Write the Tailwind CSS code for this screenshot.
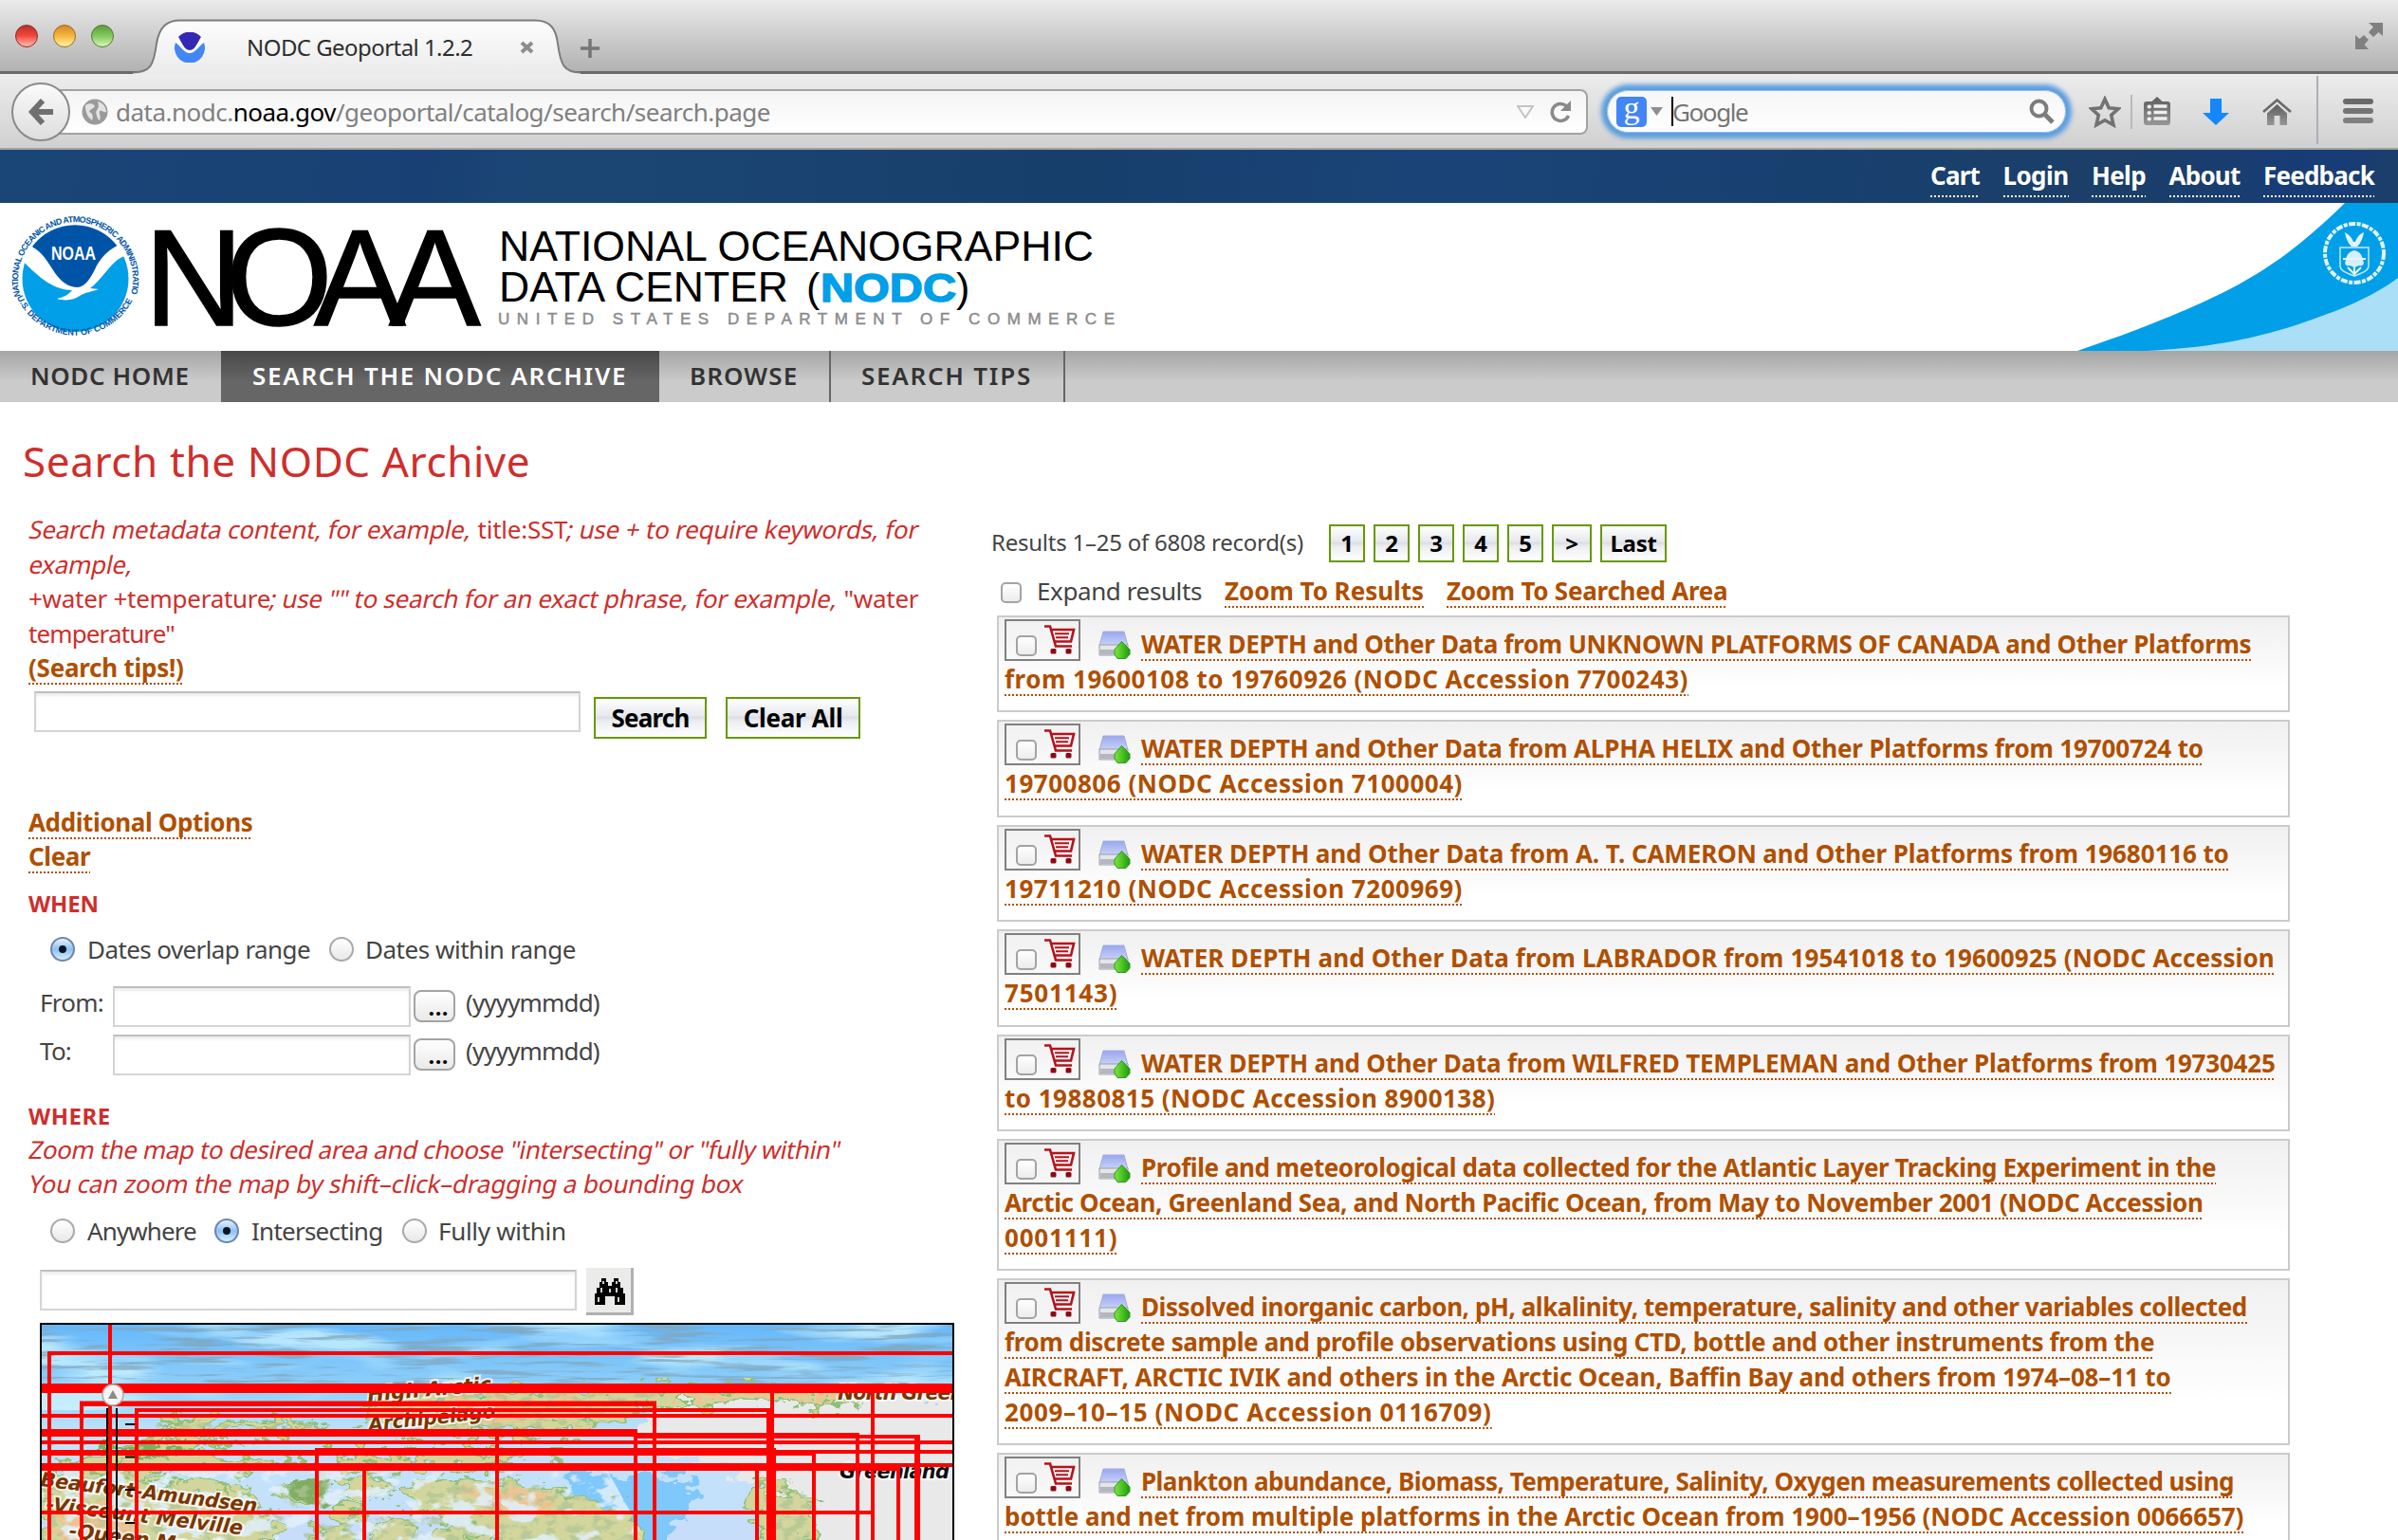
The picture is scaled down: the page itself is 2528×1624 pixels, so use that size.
<!DOCTYPE html>
<html lang="en">
<head>
<meta charset="utf-8">
<title>NODC Geoportal 1.2.2</title>
<script src="https://cdn.jsdelivr.net/npm/@tailwindcss/browser@4"></script>
</head>
<body class="bg-white overflow-hidden w-[2528px] h-[1624px] font-['Noto_Sans','Open_Sans',sans-serif] text-[26px] text-[#444]">

<svg class="absolute size-0" width="0" height="0">
  <defs>
    <linearGradient id="gGrey" x1="0" y1="0" x2="0" y2="1"><stop offset="0" stop-color="#5c5c5c"/><stop offset="1" stop-color="#979797"/></linearGradient>
    <linearGradient id="gDrive" x1="0" y1="0" x2="0" y2="1"><stop offset="0" stop-color="#9aa6f0"/><stop offset="1" stop-color="#c9d3f7"/></linearGradient>
    <linearGradient id="gGreen" x1="0" y1="0" x2="1" y2="0"><stop offset="0" stop-color="#7ee83c"/><stop offset="1" stop-color="#1d9a10"/></linearGradient>
    <symbol id="cart" viewBox="0 0 34 31">
      <path d="M1 1.5H7L13 22.5H30" fill="none" stroke="#b5121b" stroke-width="2.6"/>
      <path d="M8 5H32L29 17.5H12" fill="none" stroke="#b5121b" stroke-width="2.6"/>
      <path d="M12 9.3H27M13 13.3H26" stroke="#b5121b" stroke-width="2"/>
      <rect x="7.500" y="25" width="6" height="5.500" rx="1.500" fill="#8d0a12"/><rect x="23.500" y="25" width="6" height="5.500" rx="1.500" fill="#8d0a12"/>
    </symbol>
    <symbol id="drive" viewBox="0 0 34 30">
      <path d="M5 1H27L31 16H1Z" fill="url(#gDrive)" stroke="#a5addc" stroke-width="1"/>
      <path d="M1 15H31V26H1Z" fill="#e3e5e8" stroke="#9a9fa8" stroke-width="1"/>
      <path d="M2 20H18V25H2Z" fill="#b3b7bf"/>
      <path d="M24.500 11.500L33 20V25L29 29.500H20L17 25V20Z" fill="url(#gGreen)" stroke="#2a9a1a" stroke-width="1"/>
    </symbol>
  </defs>
</svg>

<!-- tab strip -->
<header class="flex h-[78px] border-b-[3px] border-[#6a6a6a] bg-linear-to-b from-[#eaeaea] to-[#b2b2b2]">
  <div class="flex gap-4 pl-4 pt-[26px]">
    <i class="size-6 rounded-full border border-[#8d2a22] bg-linear-to-b from-[#b5322a] via-[#f4473c] to-[#ffb9b2]"></i>
    <i class="size-6 rounded-full border border-[#9a6a1c] bg-linear-to-b from-[#d8862a] via-[#f7b73c] to-[#fff3a0]"></i>
    <i class="size-6 rounded-full border border-[#4c7a30] bg-linear-to-b from-[#5f9c3c] via-[#84c95c] to-[#d8f7b8]"></i>
  </div>
  <div class="relative ml-[20px] h-[78px] w-[472px]">
    <svg class="absolute inset-0" width="472" height="78" viewBox="0 0 472 78">
      <defs><linearGradient id="tb" x1="0" y1="0" x2="0" y2="1"><stop offset="0" stop-color="#fdfdfd"/><stop offset="1" stop-color="#ebebeb"/></linearGradient></defs>
      <path d="M0 78V76C18 76 22 70 25 46C28 28 36 21.500 50 21.500H424C440 21.500 446 30 448 46C451 68 454 76 472 76V78Z" fill="url(#tb)"/>
      <path d="M0 76.500C18 76 22 70 25 46C28 28 36 21.500 50 21.500H424C440 21.500 446 30 448 46C451 68 454 76 472 76.500" fill="none" stroke="#7c7c7c" stroke-width="2"/>
    </svg>
    <div class="relative flex h-[78px] pl-[44px]">
      <svg class="mt-[34px] shrink-0" width="32" height="32" viewBox="0 0 32 32"><circle cx="16" cy="16" r="16" fill="#fff"/><path d="M1 11C6 14 10 22 16 22C22 22 26 14 31 11A16 16 0 1 1 1 11Z" fill="#4287f5"/><path d="M4 5A16 16 0 0 1 28 5C25 9 22 19 16 19C10 19 7 9 4 5Z" fill="#3329b5"/></svg>
      <span class="ml-[44px] mt-[32px] w-[288px] whitespace-nowrap text-[24px] leading-[36px] tracking-[-0.550px] text-[#2e2e2e]">NODC Geoportal 1.2.2</span>
      <svg class="mt-[43px] shrink-0" width="15" height="14" viewBox="0 0 15 14"><path d="M2 2L13 12M13 2L2 12" stroke="#8d8d8d" stroke-width="4"/></svg>
    </div>
  </div>
  <svg class="mt-[41px]" width="20" height="20" viewBox="0 0 20 20"><path d="M10 0V20M0 10H20" stroke="#767676" stroke-width="3.500"/></svg>
  <svg class="ml-auto mr-4 mt-6" width="29" height="28" viewBox="0 0 29 28"><path d="M14 0H29V14L24.500 10L19 15L14 10L19 4.500Z" fill="#808080"/><path d="M0 13L4.500 17L9 13L14 18L9.500 23L14 28H0Z" fill="#808080"/></svg>
</header>

<!-- toolbar -->
<div class="flex h-20 items-start border-b-2 border-[#a0a0a0] bg-linear-to-b from-[#ededed] to-[#d0d0d0]">
  <div class="relative z-10 ml-[12px] mt-[9px] flex size-[62px] items-center justify-center rounded-full border-2 border-[#8a8a8a] bg-linear-to-b from-[#fafafa] to-[#dedede]">
    <svg width="28" height="30" viewBox="0 0 28 30"><path d="M16 3L5 15L16 27M6 15H27" fill="none" stroke="#6f6f6f" stroke-width="6"/></svg>
  </div>
  <div class="-ml-[31px] mt-4 flex h-12 w-[1631px] items-center rounded-r-lg border-2 border-[#a2a2a2] bg-linear-to-b from-[#f4f4f4] to-white pl-[41px]">
    <svg width="28" height="28" viewBox="0 0 28 28"><circle cx="14" cy="14" r="13.500" fill="#9a9a9a"/><path d="M4 7C8 4 13 5 14 8C12 11 9 11 8 14C11 15 13 18 11 23C7 20 4 15 4 7ZM17 3C22 4 26 9 26 14C23 15 22 12 19 13C18 17 21 18 19 23C16 21 16 17 15 14C17 11 19 9 17 3Z" fill="#e2e2e2"/></svg>
    <span class="ml-2 mt-px whitespace-nowrap tracking-[-0.51px] text-[#808080]">data.nodc.<span class="text-black">noaa.gov</span>/geoportal/catalog/search/search.page</span>
    <svg class="ml-auto" width="18" height="14" viewBox="0 0 18 14"><path d="M1 1H17L9 13Z" fill="none" stroke="#c4c4c4" stroke-width="2"/></svg>
    <svg class="ml-[16px] mr-3.5" width="25" height="26" viewBox="0 0 25 26"><path d="M20.500 17A9 9 0 1 1 18 6.500" fill="none" stroke="#8a8a8a" stroke-width="3.500"/><path d="M23 1V12H12Z" fill="#8a8a8a"/></svg>
  </div>
  <div class="ml-[20px] mt-[17px] flex h-[45px] w-[484px] items-center rounded-full border border-[#8fbdea] bg-linear-to-b from-[#f6f6f6] to-white pl-[9px] shadow-[0_0_5px_6px_#5a9de0]">
    <span class="flex size-8 items-center justify-center rounded-[5px] bg-[#4285f4] font-['Liberation_Serif',serif] text-[34px] leading-none text-white"><span class="-mt-2">g</span></span>
    <svg class="ml-1" width="13" height="9" viewBox="0 0 13 9"><path d="M0 0H13L6.500 9Z" fill="#8e8e8e"/></svg>
    <span class="ml-[9px] h-[31px] w-0.5 bg-black"></span>
    <span class="-ml-px mt-0.5 tracking-[-1.4px] text-[#757575]">Google</span>
    <svg class="ml-auto mr-[11px]" width="27" height="27" viewBox="0 0 27 27"><circle cx="10.500" cy="10.500" r="8" fill="none" stroke="#7d7d7d" stroke-width="4"/><path d="M16 16L25 25" stroke="#7d7d7d" stroke-width="5"/></svg>
  </div>
  <svg class="ml-[24px] mt-[23px]" width="34" height="34" viewBox="0 0 34 34"><path d="M17 3.500L21.200 12.800L31 13.800L23.700 20.400L26 30.800L17 25.800L8 30.800L10.300 20.400L3 13.800L12.800 12.800Z" fill="none" stroke="#727272" stroke-width="3.600"/></svg>
  <span class="ml-[10px] mt-[22px] h-9 w-0.5 bg-[#b9b9b9]"></span>
  <svg class="ml-[12px] mt-6" width="28" height="30" viewBox="0 0 28 30"><path d="M3 5H8.500L14 0L19.500 5H25Q28 5 28 8V27Q28 30 25 30H3Q0 30 0 27V8Q0 5 3 5Z" fill="url(#gGrey)"/><path d="M5.500 10.500H6M5.500 17H6M5.500 23.500H6" stroke="#eee" stroke-width="4" stroke-linecap="round"/><path d="M10.500 10H24.500M10.500 16.500H24.500M10.500 23H24.500" stroke="#eee" stroke-width="3.600"/></svg>
  <svg class="ml-[34px] mt-[26px]" width="28" height="28" viewBox="0 0 28 28"><path d="M8 0H20V15H28L14 28L0 15H8Z" fill="#1488fb"/></svg>
  <svg class="ml-[35px] mt-[26px]" width="31" height="28" viewBox="0 0 31 28"><path d="M1 14L15.500 1.500L30 14" fill="none" stroke="#6a6a6a" stroke-width="2.600"/><path d="M15.500 6L26 15.500V28H18.500V18H12.500V28H5V15.500Z" fill="url(#gGrey)"/></svg>
  <span class="ml-[26px] mt-0.5 h-[72px] w-0.5 bg-[#aab0b8]"></span>
  <div class="ml-[26px] mt-[26px] flex w-8 flex-col gap-1"><i class="h-1.5 rounded-full bg-[#6a6a6a]"></i><i class="h-1.5 rounded-full bg-[#747474]"></i><i class="h-1.5 rounded-full bg-[#808080]"></i></div>
</div>

<!-- utility links -->
<nav class="flex h-14 justify-end gap-[24.500px] bg-[#19426f] bg-[linear-gradient(100deg,#1a4577_0%,#184074_18%,#1b4674_22%,#173f6c_45%,#1a4478_60%,#18406f_75%,#1b3f68_88%,#173c78_97%,#1c3f68_100%)] pr-[25px] pt-[9px] font-bold leading-9 text-white" id="util"></nav>

<!-- banner -->
<div class="flex h-[156px] justify-between">
  <svg width="1200" height="156" viewBox="0 0 1200 156">
    <defs><path id="ringTop" d="M21.500 98A60.500 60.500 0 1 1 137.500 98"/><path id="ringBot" d="M15 92A67.500 67.500 0 0 0 144 92"/></defs>
    <circle cx="79.500" cy="80" r="56" fill="#009fe8"/>
    <path d="M34 46A56 56 0 0 1 124 46C112 53 104 65 97 77C92 86 88 90 80 90C70 89 62 80 55 70C48 58 42 50 34 46Z" fill="#0054a8"/>
    <path d="M32 46C44 50 50 62 58 74C65 84 73 89 82 89C91 88 97 77 102 66C109 54 117 48 126 44L131 56C121 60 115 69 108 77C103 83 100 86 95 90L104 91C96 94 90 94 84 98C78 102 70 104 60 101C68 99 72 97 76 92C58 92 42 80 24 61Z" fill="#fff"/>
    <text x="54" y="60" textLength="47" lengthAdjust="spacingAndGlyphs" font-family="Liberation Sans, sans-serif" font-weight="700" font-size="20" fill="#fff">NOAA</text>
    <g font-family="Liberation Sans, sans-serif" font-weight="700" font-size="9" fill="#0054a8"><text textLength="228"><textPath href="#ringTop">NATIONAL OCEANIC AND ATMOSPHERIC ADMINISTRATION</textPath></text><text textLength="152"><textPath href="#ringBot" startOffset="8">U.S. DEPARTMENT OF COMMERCE</textPath></text></g>
    <text x="152 238 331 410" y="129" font-family="Liberation Sans, sans-serif" font-size="145" stroke="#000" stroke-width="1.500">NOAA</text>
    <g font-family="Liberation Sans, sans-serif" font-size="43">
      <text x="526" y="61" textLength="627" lengthAdjust="spacingAndGlyphs" font-size="44">NATIONAL OCEANOGRAPHIC</text>
      <text x="526" y="104" textLength="305" lengthAdjust="spacingAndGlyphs" font-size="44">DATA CENTER</text>
      <text x="850" y="104">(</text><text x="865" y="104" textLength="143" lengthAdjust="spacingAndGlyphs" font-weight="700" fill="#009fe8" stroke="#009fe8" stroke-width="1.500">NODC</text><text x="1008" y="104">)</text>
      <text x="525" y="128" textLength="650" lengthAdjust="spacing" font-size="17" fill="#8c8c8c" stroke="#8c8c8c" stroke-width=".5">UNITED STATES DEPARTMENT OF COMMERCE</text>
    </g>
  </svg>
  <svg width="340" height="156" viewBox="0 0 340 156">
    <path d="M284 0C245 38 215 62 172 86C120 114 50 140 2 156H340V0Z" fill="#009fe8"/>
    <path d="M75 156C150 152 190 142 232 129C280 113 315 98 340 79V156Z" fill="#aadff7"/>
    <circle cx="294" cy="53" r="31" fill="none" stroke="#e3f5fd" stroke-width="4" stroke-dasharray="7 1.500 4 1.500"/>
    <path d="M284 31C288 33 291 36 293 41L295 41C297 36 299 33 304 31C303 38 300 43 297 46H291C288 43 285 38 284 31Z" fill="#e3f5fd"/>
    <path d="M279 47H309V66C309 72 302 74 294 77C286 74 279 72 279 66Z" fill="none" stroke="#c5eafa" stroke-width="1.500"/>
    <path d="M285 60C286 53 290 51 294 50C298 51 302 53 303 60C305 65 303 67 299 66L294 68L289 66C285 67 283 65 285 60Z" fill="#d5f0fc"/>
    <path d="M282 59H306M294 66V76M287 68L294 75L301 68" stroke="#e3f5fd" stroke-width="2" fill="none"/>
  </svg>
</div>

<!-- main menu -->
<nav class="flex h-[54px] bg-linear-to-b from-[#a6a6a6] to-[#cbcbcb] to-60% font-semibold leading-[53px] text-[#333] whitespace-nowrap">
  <a class="w-[233px] pl-8 tracking-[0.6px]">NODC HOME</a>
  <a class="w-[462px] bg-linear-to-b from-[#484848] to-[#666] to-60% pl-[33px] tracking-[1.700px] text-white">SEARCH THE NODC ARCHIVE</a>
  <a class="w-[181px] border-r-2 border-[#666] pl-8 tracking-[1.100px]">BROWSE</a>
  <a class="w-[247px] border-r-2 border-[#666] pl-8 tracking-[1.750px]">SEARCH TIPS</a>
</nav>

<h1 class="pl-6 pt-8 text-[44px] leading-[60px] tracking-[0.6px] text-[#cf2e2b]">Search the NODC Archive</h1>

<main class="flex">
  <section class="w-[1045px] shrink-0 pl-[30px] pt-6">
    <p class="whitespace-pre leading-[36.500px] tracking-[-0.220px] text-[#cf2e2b]"><span class="inline-block -skew-x-12 pl-px">Search metadata content, for example, </span>title:SST<span class="inline-block -skew-x-12">; use + to require keywords, for</span>
<span class="inline-block -skew-x-12 pl-px">example,</span>
<span class="tracking-[-0.280px]">+water +temperature<span class="inline-block -skew-x-12">; use "" to search for an exact phrase, for example, </span>"water</span>
<span class="tracking-[-0.880px]">temperature"</span>
<a class="bg-[repeating-linear-gradient(90deg,#b04f00_0_2px,transparent_2px_4px)] bg-[length:100%_2px] bg-bottom bg-no-repeat font-bold tracking-[-0.250px] text-[#b04f00]">(Search tips!)</a></p>
    <div class="mt-[6px] flex h-[50px] pl-[6px]">
      <div class="h-[43px] w-[576px] border-2 border-[#d4d4d4] border-t-[#bfbfbf] shadow-[inset_0_3px_3px_#eee]"></div>
      <button class="ml-[14px] mt-1.5 h-11 w-[119px] border-2 border-[#669900] bg-[linear-gradient(#fff,#e6e8ed_45%,#dadde4_48%,#eceef2_60%,#fff)] font-bold leading-10 tracking-[-0.8px] text-black">Search</button>
      <button class="ml-5 mt-1.5 h-11 w-[142px] border-2 border-[#669900] bg-[linear-gradient(#fff,#e6e8ed_45%,#dadde4_48%,#eceef2_60%,#fff)] font-bold leading-10 tracking-[-0.3px] text-black">Clear All</button>
    </div>
    <p class="mt-[70px] font-bold leading-9 text-[#b04f00]">
      <a class="bg-[repeating-linear-gradient(90deg,#b04f00_0_2px,transparent_2px_4px)] bg-[length:100%_2px] bg-bottom bg-no-repeat tracking-[-0.380px]">Additional Options</a><br>
      <a class="bg-[repeating-linear-gradient(90deg,#b04f00_0_2px,transparent_2px_4px)] bg-[length:100%_2px] bg-bottom bg-no-repeat tracking-[-0.4px]">Clear</a>
    </p>
    <h2 class="mt-[14px] text-[24px] font-bold leading-9 tracking-[-0.2px] text-[#cf2e2b]">WHEN</h2>
    <div class="mt-3 flex h-9 items-center pl-[23px] leading-9 whitespace-nowrap">
      <i class="flex size-[26px] items-center justify-center rounded-full border-2 border-[#6f86ac] bg-linear-to-b from-[#e8f2fc] via-[#8cc0f3] to-[#d2f0ff]"><b class="size-2 rounded-full bg-[#0c1420]"></b></i>
      <span class="ml-[13px] w-[255px] tracking-[-0.590px]">Dates overlap range</span>
      <i class="size-[26px] shrink-0 rounded-full border-2 border-[#a9a9a9] bg-linear-to-b from-white to-[#e8e8e8]"></i>
      <span class="ml-[12px] tracking-[-0.480px]">Dates within range</span>
    </div>
    <div class="mt-[21px] flex h-[43px] pl-3">
      <span class="w-[77px] leading-[35px] tracking-[-0.750px]">From:</span>
      <div class="w-[314px] border-2 border-[#d4d4d4] border-t-[#bfbfbf] shadow-[inset_0_3px_3px_#eee]"></div>
      <button class="ml-[3px] mt-1 h-[34px] w-11 rounded-lg border-2 border-[#a4a4a4] bg-linear-to-b from-white to-[#e9e9e9] pl-2 font-semibold leading-[30px] text-black">...</button>
      <span class="ml-[11px] leading-[35px] tracking-[-0.850px]">(yyyymmdd)</span>
    </div>
    <div class="mt-2 flex h-[43px] pl-3">
      <span class="w-[77px] leading-[35px] tracking-[-0.750px]">To:</span>
      <div class="w-[314px] border-2 border-[#d4d4d4] border-t-[#bfbfbf] shadow-[inset_0_3px_3px_#eee]"></div>
      <button class="ml-[3px] mt-1 h-[34px] w-11 rounded-lg border-2 border-[#a4a4a4] bg-linear-to-b from-white to-[#e9e9e9] pl-2 font-semibold leading-[30px] text-black">...</button>
      <span class="ml-[11px] leading-[35px] tracking-[-0.850px]">(yyyymmdd)</span>
    </div>
    <h2 class="mt-[25px] text-[24px] font-bold leading-9 tracking-[0.5px] text-[#cf2e2b]">WHERE</h2>
    <p class="-mt-px whitespace-nowrap leading-[36.500px] text-[#cf2e2b]"><span class="inline-block -skew-x-12 pl-px tracking-[-0.410px]">Zoom the map to desired area and choose "intersecting" or "fully within"</span><br><span class="inline-block -skew-x-12 pl-px tracking-[-0.160px]">You can zoom the map by shift–click–dragging a bounding box</span></p>
    <div class="mt-[13px] flex h-9 items-center pl-[23px] leading-9 whitespace-nowrap">
      <i class="size-[26px] shrink-0 rounded-full border-2 border-[#a9a9a9] bg-linear-to-b from-white to-[#e8e8e8]"></i>
      <span class="ml-[13px] w-[134px] tracking-[-0.9px]">Anywhere</span>
      <i class="flex size-[26px] items-center justify-center rounded-full border-2 border-[#6f86ac] bg-linear-to-b from-[#e8f2fc] via-[#8cc0f3] to-[#d2f0ff]"><b class="size-2 rounded-full bg-[#0c1420]"></b></i>
      <span class="ml-[13px] w-[159px] tracking-[-0.750px]">Intersecting</span>
      <i class="size-[26px] shrink-0 rounded-full border-2 border-[#a9a9a9] bg-linear-to-b from-white to-[#e8e8e8]"></i>
      <span class="ml-[12px] tracking-[-0.3px]">Fully within</span>
    </div>
    <div class="mt-[21px] flex h-[50px] pl-3">
      <div class="mt-0.5 h-[43px] w-[566px] border-2 border-[#d4d4d4] border-t-[#bfbfbf] shadow-[inset_0_3px_3px_#eee]"></div>
      <div class="ml-[10px] flex h-[50px] w-[50px] items-center justify-center border-b-3 border-r-3 border-[#b0b0b0] bg-[#ebebe9]">
        <svg class="ml-0.5 mt-1" width="32" height="28" viewBox="0 0 32 28"><path d="M7 0H12V4H14V8H18V4H20V0H25V4H27V10H30V16H32V28H21V19H11V28H0V16H2V10H5V4H7Z" fill="#000"/><path d="M8 3H10V6H8ZM22 3H24V6H22ZM6 10H8V15H6ZM15 11H17V15H15ZM22 10H24V15H22ZM3 20H5V25H3ZM24 20H26V25H24Z" fill="#cfcfcf"/></svg>
      </div>
    </div>
    <div class="ml-3 mt-2 h-[240px] w-[964px] overflow-hidden border-2 border-black">
      <svg width="960" height="236" viewBox="44 1397 960 236">
        <defs>
          <linearGradient id="sea" x1="0" y1="0" x2="0" y2="1"><stop offset="0" stop-color="#66b8fb"/><stop offset=".25" stop-color="#8acdf9"/><stop offset=".5" stop-color="#c0e5fa"/><stop offset="1" stop-color="#c8dcfa"/></linearGradient>
          <filter id="rough" x="-5%" y="-5%" width="110%" height="110%"><feTurbulence type="fractalNoise" baseFrequency=".045 .07" numOctaves="4" seed="4"/><feDisplacementMap in="SourceGraphic" scale="44" xChannelSelector="R" yChannelSelector="G"/></filter>
          <filter id="streak" x="0" y="0" width="100%" height="100%"><feTurbulence type="fractalNoise" baseFrequency=".012 .2" numOctaves="4" seed="9"/><feColorMatrix values="0 0 0 0 .22  0 0 0 0 .38  0 0 0 0 .5  6 0 0 0 -3.100"/></filter>
          <filter id="shine" x="0" y="0" width="100%" height="100%"><feTurbulence type="fractalNoise" baseFrequency=".006 .03" numOctaves="3" seed="21"/><feColorMatrix values="0 0 0 0 .66  0 0 0 0 .94  0 0 0 0 1  4 0 0 0 -1.900"/></filter>
          <filter id="relief" x="0" y="0" width="100%" height="100%"><feTurbulence type="fractalNoise" baseFrequency=".08 .12" numOctaves="4" seed="2"/><feColorMatrix values="0 0 0 0 .42  0 0 0 0 .55  0 0 0 0 .3  6 0 0 0 -2.900"/><feComposite in2="SourceGraphic" operator="in"/></filter>
          <filter id="inlets" x="0" y="0" width="100%" height="100%"><feTurbulence type="fractalNoise" baseFrequency=".03 .05" numOctaves="4" seed="31"/><feColorMatrix values="0 0 0 0 .76  0 0 0 0 .87  0 0 0 0 .98  12 0 0 0 -6.400"/><feComposite in2="SourceGraphic" operator="in"/></filter>
          <g id="isles">
            <path d="M170 1500Q240 1496 340 1502L300 1510H180ZM130 1522L190 1515L250 1520L200 1528ZM400 1470L560 1466L700 1462L880 1466L900 1478L700 1482L640 1500L560 1512L430 1508L380 1490ZM60 1538L180 1534L330 1540L200 1552L70 1550ZM350 1534L500 1528L600 1534L500 1546L360 1546Z"/>
            <path d="M44 1556L130 1552L240 1570L300 1610L260 1640H44ZM230 1566L260 1560L262 1580L232 1584ZM290 1566L340 1556L350 1580L320 1590ZM358 1560L420 1558L400 1574L362 1578ZM420 1570L470 1558L540 1562L620 1578L670 1600L690 1640H540L500 1612L430 1588ZM350 1590L384 1582L390 1600L352 1604ZM330 1612L360 1604L370 1640H320ZM390 1612L430 1602L450 1640H392ZM460 1610L500 1604L520 1640H462ZM800 1560L860 1580L850 1640H820L790 1590Z"/>
          </g>
        </defs>
        <rect x="44" y="1397" width="960" height="236" fill="url(#sea)"/>
        <rect x="44" y="1397" width="960" height="90" filter="url(#shine)" opacity=".7"/>
        <rect x="44" y="1397" width="960" height="66" filter="url(#streak)" opacity=".75"/>
        <path d="M590 1550L740 1556L700 1633H700L620 1590Z" fill="#7ec8fb" filter="url(#rough)"/>
        <path d="M700 1480L860 1468H1030V1660H860L836 1580L760 1550L690 1530L670 1510Z" fill="#e9e9e9" filter="url(#rough)"/>
        <rect x="960" y="1485" width="44" height="148" fill="#e9e9e9"/>
        <use href="#isles" fill="#d3d69c" stroke="#8fc07a" stroke-width="3" filter="url(#rough)"/>
        <g filter="url(#rough)"><path d="M440 1480L600 1472L620 1490L480 1500ZM60 1600L120 1580L150 1620L70 1633ZM480 1570L560 1572L600 1590L520 1596ZM720 1470L880 1470V1476H720Z" fill="#eec493"/><path d="M290 1562L345 1556L350 1582L325 1588ZM140 1524H190V1532H140ZM100 1525H140V1530H100Z" fill="#7fae62"/></g>
        <g filter="url(#relief)" opacity=".7"><path d="M160 1500H340V1515H160ZM400 1466H700L640 1500L560 1512L430 1508ZM44 1556L130 1552L300 1600L260 1640H44ZM290 1566L350 1556V1590H300ZM420 1570L540 1560L620 1578L690 1640H540ZM320 1600H520V1640H320ZM800 1560L860 1580L850 1640H820Z"/></g>
        <path d="M44 1550H640L690 1640H44Z" filter="url(#inlets)" opacity=".85"/>
        <g font-family="DejaVu Sans, sans-serif" font-weight="700" font-style="italic" font-size="21" fill="#7a3500" stroke="#fff" stroke-opacity=".75" stroke-width="4" paint-order="stroke">
          <text transform="translate(388 1478) rotate(-5)">High Arctic</text>
          <text transform="translate(389 1509) rotate(-6)" font-size="20">Archipelago</text>
          <text x="883" y="1476" textLength="180">North Greenland</text>
          <text transform="translate(42 1567) rotate(7)" textLength="230">Beaufort-Amundsen</text>
          <text transform="translate(48 1593) rotate(7)">-Viscount Melville</text>
          <text transform="translate(72 1621) rotate(7)">-Queen Maud</text>
          <text x="885" y="1559" fill="#111" textLength="116">Greenland</text>
        </g>
        <g fill="#f00">
          <path d="M50 1425H1004V1429H54V1633H50ZM114 1397H118V1633H114ZM44 1459H1004V1469H44Z"/>
          <path d="M84 1477.500H692V1633H688V1483H88V1633H84ZM142 1485H812V1633H808V1489H146V1633H142ZM44 1491H1004V1495H44Z"/>
          <path d="M44 1507H672V1511H906V1633H902V1517H672V1633H668V1515H44ZM906 1513H970V1633H964V1517H906ZM522 1515H526V1633H522ZM44 1519H1004V1523H44Z"/>
          <path d="M44 1529H332V1527H818V1529H1004V1533H860V1633H856V1535H818V1633H812V1535H336V1633H332V1535H44ZM812 1469H816V1530H812ZM918 1469H922V1633H918Z"/>
          <path d="M44 1543H1004V1547H949V1633H945V1551H44ZM796 1551H800V1633H796ZM382 1551H386V1633H382ZM44 1593H922V1597H44Z"/>
        </g>
        <path d="M112 1485H114V1633H112ZM122 1485H124V1633H122ZM132 1501H142V1503H132ZM132 1535.500H142V1537.500H132ZM132 1570H142V1572H132ZM132 1605H142V1607H132Z"/>
        <circle cx="119" cy="1471" r="11" fill="#f4f4f4" stroke="#b9a9a9" stroke-width="1.500"/><path d="M119 1466L124 1475H114Z" fill="#8a8a8a"/>
      </svg>
    </div>
  </section>

  <section class="pt-[37px]">
    <div class="flex h-10 text-[24px] leading-9" id="pager">
      <span class="mt-px w-[356px] whitespace-nowrap tracking-[-0.240px]">Results 1–25 of 6808 record(s)</span>
    </div>
    <div class="mt-3 flex h-9 pl-[10px] leading-9 whitespace-nowrap">
      <i class="mt-[9px] size-[22px] rounded-[5px] border-2 border-[#a3a3a3] bg-linear-to-b from-white to-[#ececec]"></i>
      <span class="ml-[16px] w-[198px] tracking-[-0.4px]">Expand results</span>
      <span class="w-[234px] font-bold tracking-[-0.030px] text-[#b04f00]"><a class="bg-[repeating-linear-gradient(90deg,#b04f00_0_2px,transparent_2px_4px)] bg-[length:100%_2px] bg-bottom bg-no-repeat">Zoom To Results</a></span>
      <span class="font-bold tracking-[-0.250px] text-[#b04f00]"><a class="bg-[repeating-linear-gradient(90deg,#b04f00_0_2px,transparent_2px_4px)] bg-[length:100%_2px] bg-bottom bg-no-repeat">Zoom To Searched Area</a></span>
    </div>
    <div class="ml-1.5 mt-2 flex w-[1363px] flex-col gap-2" id="results"></div>
  </section>
</main>

<script>
// [label, letter spacing in px]
const util = [["Cart",-0.8],["Login",-0.58],["Help",-0.65],["About",-0.77],["Feedback",-0.79]];
document.getElementById("util").innerHTML = util.map(([t,s]) =>
  `<span><a class="pb-[5px] bg-[repeating-linear-gradient(90deg,#fff_0_2px,transparent_2px_4px)] bg-[length:100%_2px] bg-bottom bg-no-repeat" style="letter-spacing:${s}px">${t}</a></span>`).join("");

// [label, width]
const pages = [["1",38],["2",38],["3",38],["4",38],["5",38],["&gt;",42],["Last",70]];
document.getElementById("pager").insertAdjacentHTML("beforeend", pages.map(([t,w]) =>
  `<button class="mr-[9px] h-10 border-2 border-[#669900] bg-[linear-gradient(#fff,#e6e8ed_45%,#dadde4_48%,#eceef2_60%,#fff)] font-bold leading-9 tracking-[-0.3px] text-black" style="width:${w}px">${t}</button>`).join(""));

// each record: lines of [text, letter spacing]
const records = [
 [["WATER DEPTH and Other Data from UNKNOWN PLATFORMS OF CANADA and Other Platforms",-0.34],["from 19600108 to 19760926 (NODC Accession 7700243)",0.51]],
 [["WATER DEPTH and Other Data from ALPHA HELIX and Other Platforms from 19700724 to",-0.16],["19700806 (NODC Accession 7100004)",0.52]],
 [["WATER DEPTH and Other Data from A. T. CAMERON and Other Platforms from 19680116 to",-0.1],["19711210 (NODC Accession 7200969)",0.52]],
 [["WATER DEPTH and Other Data from LABRADOR from 19541018 to 19600925 (NODC Accession",0.12],["7501143)",0.8]],
 [["WATER DEPTH and Other Data from WILFRED TEMPLEMAN and Other Platforms from 19730425",-0.21],["to 19880815 (NODC Accession 8900138)",0.48]],
 [["Profile and meteorological data collected for the Atlantic Layer Tracking Experiment in the",-0.43],["Arctic Ocean, Greenland Sea, and North Pacific Ocean, from May to November 2001 (NODC Accession",-0.39],["0001111)",0.8]],
 [["Dissolved inorganic carbon, pH, alkalinity, temperature, salinity and other variables collected",-0.43],["from discrete sample and profile observations using CTD, bottle and other instruments from the",-0.34],["AIRCRAFT, ARCTIC IVIK and others in the Arctic Ocean, Baffin Bay and others from 1974–08–11 to",-0.13],["2009–10–15 (NODC Accession 0116709)",0.62]],
 [["Plankton abundance, Biomass, Temperature, Salinity, Oxygen measurements collected using",-0.53],["bottle and net from multiple platforms in the Arctic Ocean from 1900–1956 (NODC Accession 0066657)",-0.05]]
];
const link = ([t,s]) => `<a class="bg-[repeating-linear-gradient(90deg,#b04f00_0_2px,transparent_2px_4px)] bg-[length:100%_2px] bg-bottom bg-no-repeat" style="letter-spacing:${s}px">${t}</a>`;
document.getElementById("results").innerHTML = records.map(r => `
 <article class="shrink-0 border-2 border-[#cbcbcb] bg-linear-to-b from-[#f0f0f0] to-white to-75% pl-1.5 font-bold leading-[37px] whitespace-nowrap text-[#b04f00]" style="height:${102.4 + 36.7*(r.length-2)}px">
  <div class="flex h-[47px]">
   <div class="mt-0.5 flex h-11 w-20 border-2 border-[#808080]"><i class="ml-2.5 mt-[15px] size-[22px] rounded-[5px] border-2 border-[#a3a3a3] bg-linear-to-b from-white to-[#ececec]"></i><svg class="ml-[7px] mt-1" width="34" height="31"><use href="#cart"/></svg></div>
   <svg class="ml-[19px] mt-[14px]" width="34" height="30"><use href="#drive"/></svg>
   <span class="ml-[11px] mt-[10px]">${link(r[0])}</span>
  </div>
  ${r.slice(1).map(l => `<div>${link(l)}</div>`).join("")}
 </article>`).join("");
</script>
</body>
</html>
